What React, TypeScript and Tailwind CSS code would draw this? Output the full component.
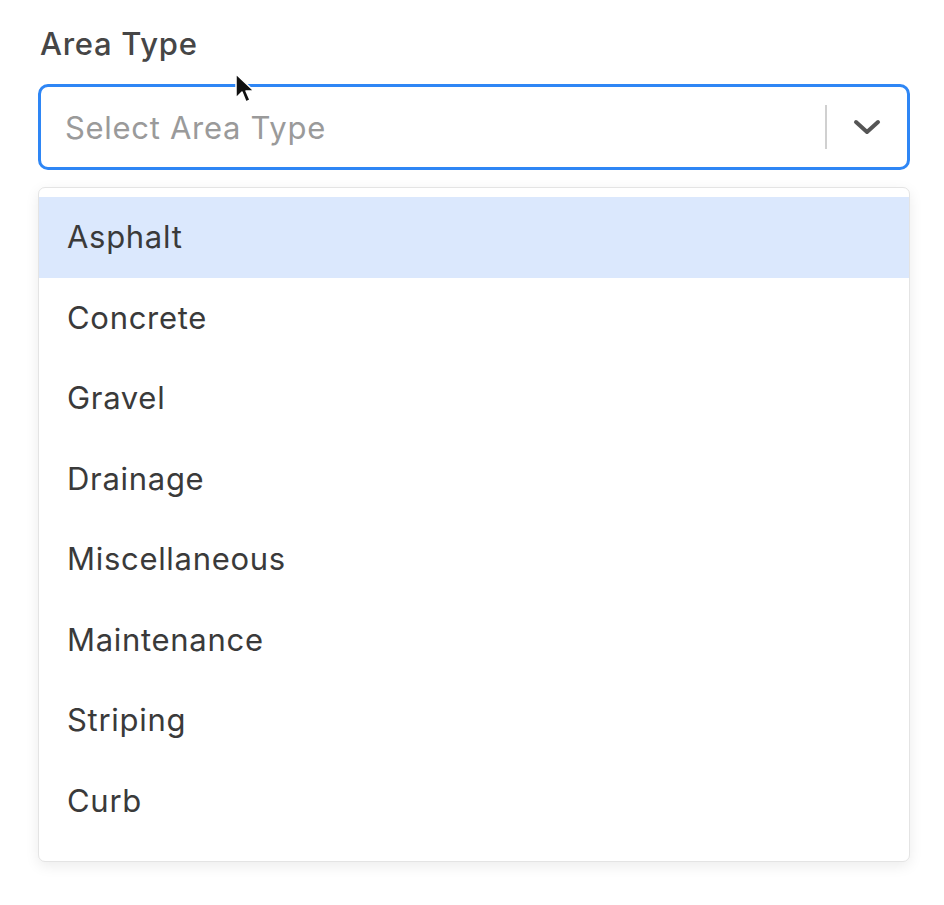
const areaTypes = [
  'Asphalt',
  'Concrete',
  'Gravel',
  'Drainage',
  'Miscellaneous',
  'Maintenance',
  'Striping',
  'Curb',
];

function Cursor() {
  return (
    <svg
      className="absolute left-[234px] top-[72px]"
      width="22"
      height="34"
      viewBox="0 0 22 34"
    >
      <path
        d="M2 2 L2 26 L8 20 L12 30 L16 28 L12 19 L20 19 Z"
        fill="#111"
        stroke="#fff"
        strokeWidth="1.5"
        strokeLinejoin="round"
      />
    </svg>
  );
}

export default function App() {
  return (
    <div className="relative min-h-[905px] w-[944px] bg-white pl-[38px] font-['Inter',sans-serif] tracking-[0.7px]">
      <div className="flex w-[872px] flex-col pt-[26px]">
        {/* Label */}
        <label className="pl-[2px] text-[31px] font-medium leading-[36px] text-[#464646]">
          Area Type
        </label>

        {/* Control */}
        <div className="mt-[22px] flex h-[86px] items-center rounded-[10px] border-[3px] border-[#2e86f5] bg-white">
          <span className="flex-1 pl-[24px] text-[31px] leading-none text-[#9a9a9a]">
            Select Area Type
          </span>
          <span className="h-[44px] w-[2px] bg-[#d0d0d0]" />
          <span className="flex w-[80px] items-center justify-center">
            <svg width="28" height="16" viewBox="0 0 28 16">
              <polyline
                points="3,3 14,13 25,3"
                fill="none"
                stroke="#555"
                strokeWidth="4"
                strokeLinecap="round"
                strokeLinejoin="round"
              />
            </svg>
          </span>
        </div>

        {/* Menu */}
        <div className="mt-[17px] rounded-[7px] border border-[#e4e4e4] bg-white pb-[20px] pt-[9px] shadow-[0_4px_14px_rgba(0,0,0,0.08)]">
          {areaTypes.map((type, i) => (
            <div
              key={type}
              className={
                i === 0
                  ? 'flex h-[80.5px] items-center bg-[#dbe8fd] pl-[28px] text-[31px] text-[#3a3a3a]'
                  : 'flex h-[80.5px] items-center pl-[28px] text-[31px] text-[#3a3a3a]'
              }
            >
              {type}
            </div>
          ))}
        </div>
      </div>

      <Cursor />
    </div>
  );
}
